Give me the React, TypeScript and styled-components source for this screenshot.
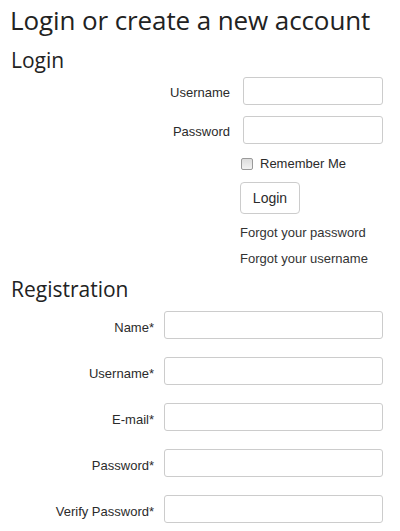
import React from "react";
import styled, { createGlobalStyle } from "styled-components";

const Global = createGlobalStyle`
  html, body { margin: 0; padding: 0; background: #fff; }
  body { font-family: "Liberation Sans", Arial, sans-serif; color: #333; }
  * { box-sizing: border-box; }
`;

const Page = styled.div`
  padding: 5px 10px 0 10px;
  width: 400px;
`;

const Title = styled.h1`
  margin: 0;
  font-family: "Open Sans", sans-serif;
  font-weight: 400;
  font-size: 26px;
  line-height: 30px;
  color: #222;
  letter-spacing: -0.1px;
`;

const SectionTitle = styled.h2<{ $top: number }>`
  margin: ${(p) => p.$top}px 0 0 1px;
  font-family: "Open Sans", sans-serif;
  font-weight: 400;
  font-size: 21px;
  line-height: 24px;
  color: #222;
`;

const FormGrid = styled.div<{ $label: number; $input: number; $gap: number; $rowGap: number; $top: number }>`
  display: grid;
  grid-template-columns: ${(p) => p.$label}px ${(p) => p.$input}px;
  column-gap: ${(p) => p.$gap}px;
  row-gap: ${(p) => p.$rowGap}px;
  margin-top: ${(p) => p.$top}px;
`;

const Label = styled.label<{ $pad: number }>`
  text-align: right;
  font-size: 13px;
  line-height: 15px;
  padding-top: ${(p) => p.$pad}px;
  color: #2b2b2b;
`;

const TextInput = styled.input`
  height: 28px;
  width: 100%;
  border: 1px solid #ccc;
  border-radius: 3px;
  background: #fff;
  padding: 4px 6px;
  font-family: inherit;
  font-size: 13px;
  outline: none;
`;

const Extras = styled.div`
  display: flex;
  flex-direction: column;
  align-items: flex-start;
  padding-left: 230px;
  margin-top: 11px;
`;

const CheckRow = styled.label`
  display: flex;
  align-items: center;
  gap: 7px;
  font-size: 13px;
  line-height: 16px;
  margin-left: 1px;
  margin-top: 1px;
  color: #2b2b2b;
`;

const Check = styled.input`
  appearance: none;
  margin: 0;
  width: 12px;
  height: 12px;
  border: 1px solid #9a9a9a;
  border-radius: 2px;
  background: linear-gradient(#dcdcdc, #f2f2f2);
`;

const Button = styled.button`
  margin-top: 10px;
  width: 60px;
  height: 32px;
  border: 1px solid #ccc;
  border-radius: 4px;
  background: #fff;
  font-family: "Liberation Sans", Arial, sans-serif;
  font-size: 14px;
  color: #2b2b2b;
  padding: 0;
`;

const LinkText = styled.a<{ $top: number }>`
  display: block;
  margin-top: ${(p) => p.$top}px;
  font-size: 13px;
  line-height: 15px;
  color: #333;
  text-decoration: none;
`;

const loginFields = ["Username", "Password"];
const regFields = ["Name*", "Username*", "E-mail*", "Password*", "Verify Password*"];

export default function App() {
  return (
    <>
      <Global />
      <Page>
        <Title>Login or create a new account</Title>
        <SectionTitle $top={13}>Login</SectionTitle>
        <FormGrid $label={220} $input={140} $gap={13} $rowGap={11} $top={5}>
          {loginFields.map((f) => (
            <React.Fragment key={f}>
              <Label $pad={8}>{f}</Label>
              <TextInput type={f === "Password" ? "password" : "text"} />
            </React.Fragment>
          ))}
        </FormGrid>
        <Extras>
          <CheckRow>
            <Check type="checkbox" />
            Remember Me
          </CheckRow>
          <Button>Login</Button>
          <LinkText $top={11}>Forgot your password</LinkText>
          <LinkText $top={11}>Forgot your username</LinkText>
        </Extras>
        <SectionTitle $top={11}>Registration</SectionTitle>
        <FormGrid $label={144} $input={219} $gap={10} $rowGap={18} $top={10}>
          {regFields.map((f) => (
            <React.Fragment key={f}>
              <Label $pad={9}>{f}</Label>
              <TextInput type={f.includes("Password") ? "password" : "text"} />
            </React.Fragment>
          ))}
        </FormGrid>
      </Page>
    </>
  );
}
